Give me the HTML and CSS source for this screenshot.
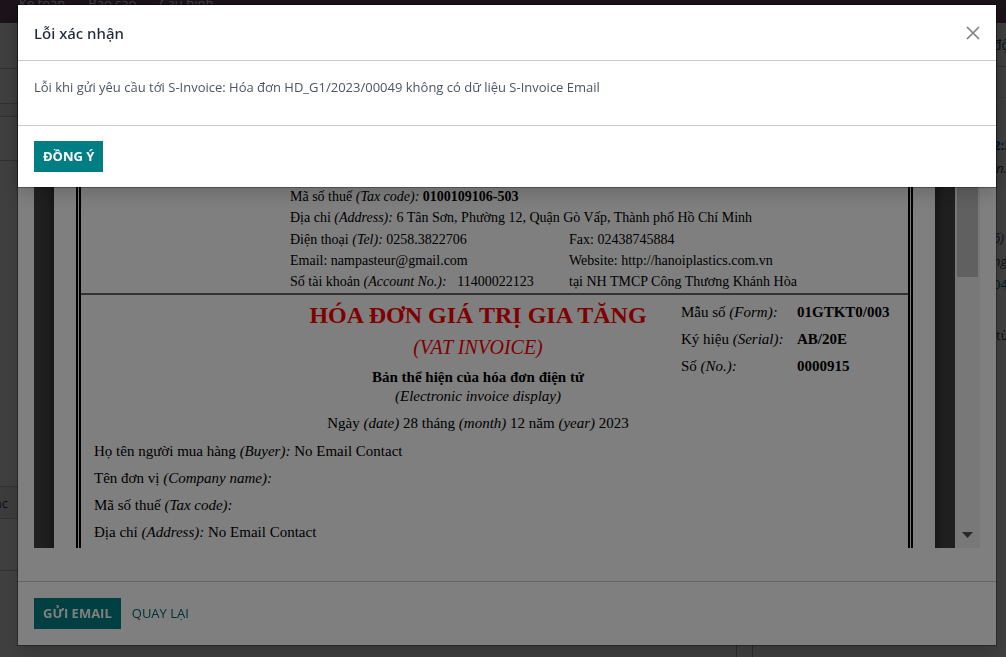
FILE: index.html
```html
<!DOCTYPE html>
<html lang="vi">
<head>
<meta charset="utf-8">
<title>Lỗi xác nhận</title>
<link rel="stylesheet" href="styles.css">
</head>
<body>
<div class="page">
  <nav class="navbar">
    <a href="#">Kế toán</a>
    <a href="#">Báo cáo</a>
    <a href="#">Cấu hình</a>
  </nav>
  <div class="columns">
    <main class="sheet">
      <div class="band band-control"></div>
      <div class="band band-actions"></div>
      <div class="band band-gap"></div>
      <div class="band band-status"></div>
      <div class="band band-form"></div>
      <div class="band tab"><span>ác</span></div>
      <div class="band band-lines"></div>
    </main>
    <div class="gutter"></div>
    <aside class="chatter">
      <div class="topbar"><span class="clip">độ</span></div>
      <div class="band-date"></div>
      <div class="log">
        <b class="clip link">2:3</b>
        <em class="clip">in.</em>
        <em class="clip second">ố)</em>
        <em class="clip">ng</em>
        <span class="clip link">04</span>
        <span class="clip last">từ</span>
      </div>
    </aside>
  </div>
</div>

<div class="layer">
  <section class="modal preview">
    <div class="preview-head"></div>
    <div class="preview-body">
      <div class="frame">
        <div class="desk">
          <div class="paper">
            <article class="invoice">
              <div class="seller">
                <p>Mã số thuế <i>(Tax code):</i> <b>0100109106-503</b></p>
                <p>Địa chỉ <i>(Address):</i> 6 Tân Sơn, Phường 12, Quận Gò Vấp, Thành phố Hồ Chí Minh</p>
                <div class="contacts">
                  <p>Điện thoại <i>(Tel):</i> 0258.3822706</p><p>Fax: 02438745884</p>
                  <p>Email: nampasteur@gmail.com</p><p>Website: http://hanoiplastics.com.vn</p>
                  <p>Số tài khoản <i>(Account No.):</i> &nbsp; 11400022123</p><p>tại NH TMCP Công Thương Khánh Hòa</p>
                </div>
              </div>
              <div class="heading">
                <div class="titles">
                  <h1>HÓA ĐƠN GIÁ TRỊ GIA TĂNG</h1>
                  <p class="subtitle">(VAT INVOICE)</p>
                  <p class="display"><b>Bản thể hiện của hóa đơn điện tử</b></p>
                  <p class="display"><i>(Electronic invoice display)</i></p>
                  <p class="date">Ngày <i>(date)</i> 28 tháng <i>(month)</i> 12 năm <i>(year)</i> 2023</p>
                </div>
                <dl class="codes">
                  <dt>Mẫu số <i>(Form):</i></dt><dd>01GTKT0/003</dd>
                  <dt>Ký hiệu <i>(Serial):</i></dt><dd>AB/20E</dd>
                  <dt>Số <i>(No.):</i></dt><dd>0000915</dd>
                </dl>
              </div>
              <div class="buyer">
                <p>Họ tên người mua hàng <i>(Buyer):</i> No Email Contact</p>
                <p>Tên đơn vị <i>(Company name):</i></p>
                <p>Mã số thuế <i>(Tax code):</i></p>
                <p>Địa chỉ <i>(Address):</i> No Email Contact</p>
              </div>
            </article>
          </div>
        </div>
        <div class="scrollbar">
          <div class="thumb"></div>
          <svg class="arrow" width="11" height="6" viewBox="0 0 11 6"><path d="M0 0h11L5.500 6z" fill="#505050"/></svg>
        </div>
      </div>
    </div>
    <footer class="preview-foot">
      <button class="btn primary" type="button">GỬI EMAIL</button>
      <button class="btn plain" type="button">QUAY LẠI</button>
    </footer>
  </section>
</div>

<div class="layer">
  <section class="modal alert" role="dialog" aria-labelledby="alert-title">
    <header class="alert-head">
      <h2 id="alert-title">Lỗi xác nhận</h2>
      <button class="close" type="button" aria-label="Đóng">
        <svg width="14" height="14" viewBox="0 0 14 14"><path d="M1 1l12 12M13 1L1 13" stroke="#808080" stroke-width="1.700" fill="none"/></svg>
      </button>
    </header>
    <p class="alert-body">Lỗi khi gửi yêu cầu tới S-Invoice: Hóa đơn HD_G1/2023/00049 không có dữ liệu S-Invoice Email</p>
    <footer class="alert-foot">
      <button class="btn primary" type="button">ĐỒNG Ý</button>
    </footer>
  </section>
</div>
</body>
</html>
```
FILE: styles.css
```css
* { box-sizing: border-box; }
html, body { height: 100%; }
body {
  margin: 0;
  overflow: hidden;
  font: 13px/20px "Open Sans", "Noto Sans", sans-serif;
  color: #374151;
}
p, h1, h2, dl, dd { margin: 0; }

/* Page under the dialogs */
.page { display: flex; flex-direction: column; height: 100%; overflow: hidden; }
.navbar {
  display: flex;
  gap: 23px;
  height: 23px;
  padding-left: 19px;
  line-height: 6px;
  background: #714b67;
}
.navbar a { color: #fff; text-decoration: none; }
.columns { display: grid; grid-template-columns: 1fr 17px 253px; flex: 1; }
.sheet { display: flex; flex-direction: column; }
.band { border-bottom: 1px solid #c8c8c8; }
.band-control { height: 46px; }
.band-actions { height: 35px; }
.band-gap { height: 13px; background: #f4f4f4; }
.band-status { height: 44px; }
.band-form { height: 326px; }
.tab {
  display: flex;
  justify-content: flex-end;
  width: 18px;
  height: 32px;
  padding-right: 10px;
  line-height: 32px;
  background: #f0f0f0;
}
.band-lines { height: 52px; }
.gutter { border: 1px solid #b0b0b0; border-width: 0 1px; }
.topbar { height: 44px; border-bottom: 1px solid #c8c8c8; }
.band-date { height: 31px; border-bottom: 1px solid #e4e4e4; }
.log { padding-top: 36px; }
.clip { display: block; width: 13px; margin-left: auto; line-height: 23px; white-space: nowrap; }
.topbar .clip { font-size: 14px; line-height: 44px; }
.link { color: #01698c; }
.second { margin-top: 47px; }
.last { width: 10px; margin-top: 28px; }

/* Dialog layers */
.layer {
  position: fixed;
  inset: 0;
  display: flex;
  flex-direction: column;
  padding: 5px 10px 12px 18px;
  background: rgba(0, 0, 0, .5);
}
.modal { background: #fff; outline: 1px solid rgba(0, 0, 0, .3); box-shadow: 0 8px 16px rgba(0, 0, 0, .15); }
.btn {
  height: 31px;
  padding: 0 9px;
  border: 0;
  font: 700 13px/31px "Open Sans", "Noto Sans", sans-serif;
}
.primary { background: #017e84; color: #fff; }
.plain { background: transparent; color: #01666b; font-weight: 500; }

/* Invoice preview */
.preview { display: flex; flex-direction: column; flex: 1; min-height: 0; }
.preview-head { height: 56px; border-bottom: 1px solid #c8c8c8; }
.preview-body { flex: 1; min-height: 0; padding: 16px 16px 33px; }
.frame { display: flex; height: 100%; overflow: hidden; }
.desk {
  flex: 1;
  padding: 0 20px;
  background: #404040;
  overflow: hidden;
}
.paper { background: #fff; padding: 0 22px; box-shadow: 0 0 12px rgba(0, 0, 0, .6); }
.invoice {
  height: 600px;
  border: 5px double #000;
  border-width: 0 5px;
  font: 14px/21px "Liberation Serif", serif;
  color: #000;
}
.seller { padding: 109px 0 1px 209px; border-bottom: 2px solid #666; white-space: nowrap; }
.contacts { display: grid; grid-template-columns: 279px 1fr; padding-top: 1px; }
.heading { display: grid; grid-template-columns: 198px 398px 1fr; }
.titles { grid-column: 2; text-align: center; padding-top: 4px; white-space: nowrap; }
.titles h1 { font-size: 24px; line-height: 32px; color: #f00; }
.subtitle { font-size: 20px; line-height: 32px; color: #f00; font-style: italic; }
.display { font-size: 15px; line-height: 19px; }
.subtitle + .display { margin-top: 5px; }
.date { margin-top: 4px; font-size: 15px; line-height: 27px; }
.codes {
  display: grid;
  grid-template-columns: 116px 1fr;
  align-content: start;
  padding: 4px 0 0 4px;
  font-size: 15px;
  line-height: 27px;
  white-space: nowrap;
}
.codes dd { font-weight: bold; }
.buyer { padding: 1px 0 0 13px; font-size: 15px; line-height: 27px; }
.scrollbar {
  display: flex;
  flex-direction: column;
  justify-content: space-between;
  width: 25px;
  padding-bottom: 10px;
  background: #f1f1f1;
}
.thumb { width: 21px; height: 200px; margin-left: 2px; background: #c1c1c1; }
.arrow { margin-left: 7px; }
.preview-foot {
  display: flex;
  gap: 2px;
  padding: 16px;
  border-top: 1px solid #c8c8c8;
}

/* Validation alert */
.alert-head {
  display: flex;
  align-items: center;
  justify-content: space-between;
  height: 56px;
  padding: 0 16px;
  border-bottom: 1px solid #c9cbd0;
}
.alert-head h2 { font: 500 15px/24px "Noto Sans", "Open Sans", sans-serif; color: #1f2937; }
.close { display: flex; padding: 0; border: 0; background: none; }
.alert-body { padding: 16px 16px 28px; color: #4b5563; }
.alert-foot { display: flex; padding: 15px 16px; border-top: 1px solid #c9cbd0; }
```
